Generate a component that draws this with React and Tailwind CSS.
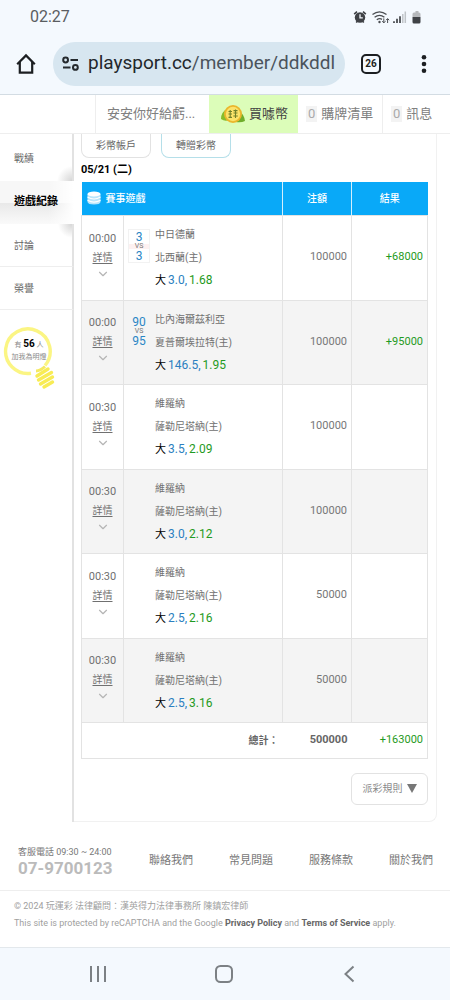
import { ChevronDown } from "lucide-react";

const bets = [
  { time: "00:00", score: [3, 3], boxed: true, away: "中日德蘭", home: "北西蘭(主)", line: "3.0", odds: "1.68", stake: 100000, result: "+68000" },
  { time: "00:00", score: [90, 95], away: "比內海爾茲利亞", home: "夏普爾埃拉特(主)", line: "146.5", odds: "1.95", stake: 100000, result: "+95000" },
  { time: "00:30", away: "維羅納", home: "薩勒尼塔納(主)", line: "3.5", odds: "2.09", stake: 100000 },
  { time: "00:30", away: "維羅納", home: "薩勒尼塔納(主)", line: "3.0", odds: "2.12", stake: 100000 },
  { time: "00:30", away: "維羅納", home: "薩勒尼塔納(主)", line: "2.5", odds: "2.16", stake: 50000 },
  { time: "00:30", away: "維羅納", home: "薩勒尼塔納(主)", line: "2.5", odds: "3.16", stake: 50000 },
];

function StatusBar() {
  return (
    <div className="flex h-[33px] items-center justify-between pl-[30px] pr-7 text-[#5a5d61]">
      <span className="text-base">02:27</span>
      <svg width="70" height="16" viewBox="0 0 70 16" fill="none">
        {/* alarm */}
        <circle cx="8" cy="8.5" r="5.2" fill="#3f4246" />
        <path d="M2.2 5.2 L5 2.6 M13.8 5.2 L11 2.6 M4.2 13.6 L5.4 12.2 M11.8 13.6 L10.6 12.2" stroke="#3f4246" strokeWidth="1.6" />
        <path d="M8 5.2 V8.8 H10.8" stroke="#f4f9fe" strokeWidth="1.3" />
        {/* wifi */}
        <path d="M20.5 5.6 Q27.5 0 34.5 5.6 M22.6 8.2 Q27.5 4.4 32.4 8.2 M24.8 10.8 Q27.5 8.8 30 10.4" stroke="#4a4d51" strokeWidth="1.3" />
        <circle cx="27.5" cy="13" r="1.2" fill="#4a4d51" />
        <path d="M31.8 9.4 V13.8 M30.2 12.2 L31.8 13.9 L33.4 12.2 M35.6 14 V9.8 M34 11.2 L35.6 9.6 L37.2 11.2" stroke="#4a4d51" strokeWidth="1" />
        {/* signal */}
        <path d="M42 12.3 V14 M45 9.8 V14 M48 7.2 V14" stroke="#4a4d51" strokeWidth="1.8" />
        <path d="M50.8 5 V14 M53.3 2.5 V14" stroke="#bfc4c8" strokeWidth="1.5" />
        {/* battery */}
        <path d="M62 3.5 H63.5 V2 H66.5 V3.5 H67 Q68.5 3.5 68.5 5 V8 H60.5 V5 Q60.5 3.5 62 3.5Z" fill="#b5b8bb" />
        <path d="M60.5 8 H68.5 V13 Q68.5 14.5 67 14.5 H62 Q60.5 14.5 60.5 13Z" fill="#3f4246" />
      </svg>
    </div>
  );
}

function BrowserBar() {
  return (
    <div className="flex h-[62px] items-center border-b border-[#d3dce3] px-4">
      <button type="button" aria-label="Home" className="w-5">
        <svg width="20" height="22" viewBox="0 0 20 22" fill="none" stroke="#1c1f22" strokeWidth="2.2">
          <path d="M1.2 11.2 L10 2.4 L18.8 11.2" />
          <path d="M3.8 9 V19.6 H16.2 V9" />
        </svg>
      </button>
      <div className="ml-[17px] flex h-11 min-w-0 flex-1 items-center overflow-hidden rounded-full bg-[#d7e6f0] pl-[9px]">
        <svg className="shrink-0" width="18" height="16" viewBox="0 0 18 16" fill="none" stroke="#24292d" strokeWidth="2">
          <circle cx="3.6" cy="4" r="2.4" />
          <path d="M8.5 4 H16" />
          <circle cx="13.4" cy="11.4" r="2.4" />
          <path d="M1 11.4 H8.5" />
        </svg>
        <div className="ml-2 whitespace-nowrap text-[19px] text-[#4b545c]">
          <span className="text-[#22272b]">playsport.cc</span>/member/ddkddl
        </div>
      </div>
      <button
        type="button"
        className="ml-4 flex h-5 w-5 items-center justify-center rounded-[5px] border-2 border-[#1c1f22] text-[10px] font-bold text-[#1c1f22]"
      >
        26
      </button>
      <button type="button" aria-label="Menu" className="ml-8 flex w-[21px] justify-center">
        <svg width="6" height="20" viewBox="0 0 6 20" fill="#1c1f22">
          <circle cx="3" cy="3.2" r="2.3" />
          <circle cx="3" cy="10" r="2.3" />
          <circle cx="3" cy="16.8" r="2.3" />
        </svg>
      </button>
    </div>
  );
}

function CoinIcon() {
  return (
    <svg width="24" height="20" viewBox="0 0 24 20" fill="none">
      <path d="M0 15 Q0 8 6 5 L8 16 Q4 18 0 15Z" fill="#86bd2c" />
      <path d="M24 17 Q23 10 18 7 L15 18 Q20 19 24 17Z" fill="#6fae2b" />
      <circle cx="12" cy="10" r="9" fill="#eab62c" />
      <circle cx="12" cy="10" r="7.2" fill="#fbe36a" />
      <path d="M7.5 7.5 H11 M7.5 10 H11 M9.2 6 V13.6 M7.5 13.4 H11 M12.5 6.6 H16.5 M12.5 9 H16.5 M14.5 5.5 V14 M12.3 12 H16.8" stroke="#71812a" strokeWidth="1.1" />
    </svg>
  );
}

function SiteNav() {
  return (
    <nav className="flex h-[39px] items-stretch justify-end border-b border-[#eeeeee] bg-white text-[13px] text-[#808080]">
      <a href="#user" className="flex w-[114px] items-center border-l border-[#eeeeee] pl-[11px]">
        安安你好給虧...
      </a>
      <a href="#coin" className="flex w-[89px] items-center gap-1 bg-[#dcfdb9] pl-3 text-[#444444]">
        <CoinIcon />
        買噱幣
      </a>
      <a href="#cart" className="flex w-[84px] items-center gap-1 pl-2">
        <span className="bg-[#f3f3f3] px-[2px] leading-4 text-[#aaaaaa]">0</span>
        購牌清單
      </a>
      <a href="#message" className="flex w-[68px] items-center gap-1 border-l border-[#eeeeee] pl-2">
        <span className="bg-[#f3f3f3] px-[2px] leading-4 text-[#aaaaaa]">0</span>
        訊息
      </a>
    </nav>
  );
}

function LightBulb() {
  return (
    <div className="relative mt-4 h-16 w-14">
      <svg width="60" height="64" viewBox="0 0 60 64" fill="none">
        <path d="M31 47.3 A22.3 22.3 0 1 1 45 39.5" stroke="#fbf583" strokeWidth="3.4" />
        <path d="M36 45 Q40 45 45 40.5" stroke="#f5ea62" strokeWidth="3" />
        <path d="M37 50 L48 43 M38.5 54 L51.5 46.5 M40.5 58 L52.5 51 M44 61 L52.5 56" stroke="#f8ec55" strokeWidth="3.4" strokeLinecap="round" />
      </svg>
      <div className="absolute left-1 top-3 w-[50px] text-center text-[7px] leading-3 text-[#8a8a8a]">
        <div className="whitespace-nowrap">
          有 <b className="text-[10px] text-black">56</b> 人
        </div>
        <div className="whitespace-nowrap">加我為明燈</div>
      </div>
    </div>
  );
}

function Sidebar() {
  return (
    <aside className="w-[74px] shrink-0 text-[10px] text-[#666666]">
      <div className="flex h-full flex-col">
        <a
          href="#record"
          className="flex h-[47px] items-center border-r-2 border-[#e2e2e2] bg-[radial-gradient(circle_at_bottom_right,#d6d6d6,#ffffff_15px)] pl-[14px] pt-[2px]"
        >
          戰績
        </a>
        <a
          href="#games"
          className="flex h-[43px] items-center bg-[linear-gradient(to_right,transparent_65%,#ffffff),linear-gradient(#f7f7f7_50%,#e8e8e8_50%,#fafafa)] pl-[14px] text-[11px] font-bold text-black"
        >
          遊戲紀錄
        </a>
        <a
          href="#discuss"
          className="flex h-[43px] items-center border-r-2 border-b border-[#e2e2e2] border-b-[#eeeeee] bg-[radial-gradient(circle_at_top_right,#d6d6d6,#ffffff_14px)] pl-[14px]"
        >
          討論
        </a>
        <a
          href="#honor"
          className="flex h-[43px] items-center border-r-2 border-b border-[#e2e2e2] border-b-[#eeeeee] pl-[14px]"
        >
          榮譽
        </a>
        <div className="flex-1 border-r-2 border-[#e2e2e2]">
          <LightBulb />
        </div>
      </div>
    </aside>
  );
}

function BetRow({ bet }) {
  return (
    <tr className="odd:h-[85px] even:h-[84px] even:bg-[#f4f4f4]">
      <td className="border border-[#e3e3e3] pb-[6px] text-center text-[#707070]">
        <div className="leading-5">{bet.time}</div>
        <button type="button" className="block w-full text-[10px] leading-[18px] underline underline-offset-2">
          詳情
        </button>
        <ChevronDown className="mx-auto" size={14} strokeWidth={2} color="#b5b5b5" />
      </td>
      <td className="border border-[#e3e3e3]">
        <div className="flex">
          <div className="w-[31px] shrink-0 pl-1 pt-[6px]">
            {bet.score && (
              <div
                className={`flex h-[34px] w-[22px] flex-col items-center justify-between border text-xs leading-[14px] text-[#2b86c5] ${
                  bet.boxed ? "border-[#f2f2f2]" : "border-transparent"
                }`}
              >
                <span>{bet.score[0]}</span>
                <span className={`w-full text-center text-[7px] leading-[5px] text-[#777777] ${bet.boxed ? "bg-[#fdf1f1]" : ""}`}>
                  VS
                </span>
                <span>{bet.score[1]}</span>
              </div>
            )}
          </div>
          <div className="whitespace-nowrap text-[10px] leading-[23px] text-[#707070]">
            <div>{bet.away}</div>
            <div>{bet.home}</div>
            <div className="flex text-xs leading-[23px]">
              <span className="mr-[2px] text-[11px] text-black">大</span>
              <span className="text-[#2b7fc0]">{bet.line},</span>
              <span className="ml-[2px] text-[#1f9a22]">{bet.odds}</span>
            </div>
          </div>
        </div>
      </td>
      <td className="border border-[#e3e3e3] pr-1 text-right text-[#777777]">{bet.stake}</td>
      <td className="border border-[#e3e3e3] pr-1 text-right text-[#1f9a22]">{bet.result}</td>
    </tr>
  );
}

function BetTable() {
  return (
    <table className="w-full table-fixed border-collapse text-[11px]">
      <colgroup>
        <col className="w-[42px]" />
        <col />
        <col className="w-[69px]" />
        <col className="w-[76px]" />
      </colgroup>
      <thead>
        <tr className="h-[33px] bg-[#09a9f8] text-[10px] text-white">
          <th colSpan={2} className="text-left font-medium">
            <div className="flex items-center gap-[5px] pl-[5px]">
              <svg width="14" height="14" viewBox="0 0 14 14">
                <path d="M0.5 3 V11 Q1 13.5 7 13.5 Q13 13.5 13.5 11 V3Z" fill="#b9e5fb" />
                <ellipse cx="7" cy="3" rx="6.5" ry="2.6" fill="#ffffff" />
                <path d="M0.5 6 Q7 10 13.5 6 M0.5 9.2 Q7 13 13.5 9.2" stroke="#ffffff" strokeWidth="1.2" fill="none" />
              </svg>
              賽事遊戲
            </div>
          </th>
          <th className="border-l border-[#d5effc] font-medium">注額</th>
          <th className="border-l border-[#d5effc] font-medium">結果</th>
        </tr>
      </thead>
      <tbody>
        {bets.map((bet, i) => (
          <BetRow key={i} bet={bet} />
        ))}
      </tbody>
      <tfoot>
        <tr className="h-9 border border-[#e3e3e3] font-bold text-[#666666]">
          <td colSpan={2} className="pr-1 text-right text-[10px]">總計：</td>
          <td className="pr-1 text-right">500000</td>
          <td className="pr-1 text-right font-normal text-[#1f9a22]">+163000</td>
        </tr>
      </tfoot>
    </table>
  );
}

function Footer() {
  return (
    <footer className="bg-white">
      <div className="flex h-[69px] items-center justify-between border-b border-[#eeeeee] pl-[18px] pr-[17px] pt-3">
        <div>
          <div className="text-[9px] leading-3 text-[#777777]">客服電話 09:30 ~ 24:00</div>
          <div className="text-[17px] font-bold leading-5 text-[#bbbbbb]">07-9700123</div>
        </div>
        <div className="flex gap-9 text-[11px] text-[#777777]">
          <a href="#contact">聯絡我們</a>
          <a href="#faq">常見問題</a>
          <a href="#terms">服務條款</a>
          <a href="#about">關於我們</a>
        </div>
      </div>
      <div className="h-14 pl-[14px] pt-[7px] text-[9px] leading-[17px] text-[#a0a0a0]">
        <p>© 2024 玩運彩 法律顧問：漢英得力法律事務所 陳鎮宏律師</p>
        <p>
          This site is protected by reCAPTCHA and the Google{" "}
          <a href="#privacy" className="font-bold text-[#666666]">Privacy Policy</a> and{" "}
          <a href="#service" className="font-bold text-[#666666]">Terms of Service</a> apply.
        </p>
      </div>
    </footer>
  );
}

function SystemNav() {
  return (
    <div className="flex h-[53px] items-center justify-between border-t border-[#e3e8ec] bg-[#f4f9fe] pl-[89px] pr-[91px]">
      <button type="button" aria-label="Recent apps">
        <svg width="18" height="18" viewBox="0 0 18 18" stroke="#7c8185" strokeWidth="2">
          <path d="M2 1 V17 M9 1 V17 M16 1 V17" />
        </svg>
      </button>
      <button type="button" aria-label="Home screen">
        <svg width="18" height="18" viewBox="0 0 18 18" fill="none" stroke="#7c8185" strokeWidth="2">
          <rect x="1" y="1" width="16" height="16" rx="4.5" />
        </svg>
      </button>
      <button type="button" aria-label="Back">
        <svg width="18" height="18" viewBox="0 0 18 18" fill="none" stroke="#7c8185" strokeWidth="2">
          <path d="M12.5 1.5 L4.5 9 L12.5 16.5" />
        </svg>
      </button>
    </div>
  );
}

export default function App() {
  return (
    <div className="bg-white font-['Roboto','Noto_Sans_CJK_TC',sans-serif]">
      <header className="bg-[#f4f9fe]">
        <StatusBar />
        <BrowserBar />
        <SiteNav />
      </header>

      <div className="flex pr-[13px]">
        <Sidebar />
        <main className="min-w-0 flex-1 rounded-br-lg border-r border-b border-[#f1f1f1] pl-[7px] pr-2 pb-4">
          <div className="flex gap-[10px] text-[10px] text-[#666666]">
            <button type="button" className="h-6 w-[70px] rounded-b-lg border border-t-0 border-[#e2e2e2]">
              彩幣帳戶
            </button>
            <button type="button" className="h-6 w-[70px] rounded-b-lg border border-t-0 border-[#b5dfe9]">
              轉贈彩幣
            </button>
          </div>
          <h2 className="flex h-6 items-center text-[11px] font-bold text-black">05/21 (二)</h2>
          <BetTable />
          <div className="mt-[14px] flex justify-end">
            <button
              type="button"
              className="flex h-8 w-[77px] items-center justify-center gap-1 rounded-md border border-[#e2e2e2] text-[10px] text-[#8a8a8a]"
            >
              派彩規則
              <svg width="10" height="9" viewBox="0 0 10 9" fill="#777777">
                <path d="M0 0 H10 L5 9Z" />
              </svg>
            </button>
          </div>
        </main>
      </div>

      <Footer />
      <SystemNav />
    </div>
  );
}
